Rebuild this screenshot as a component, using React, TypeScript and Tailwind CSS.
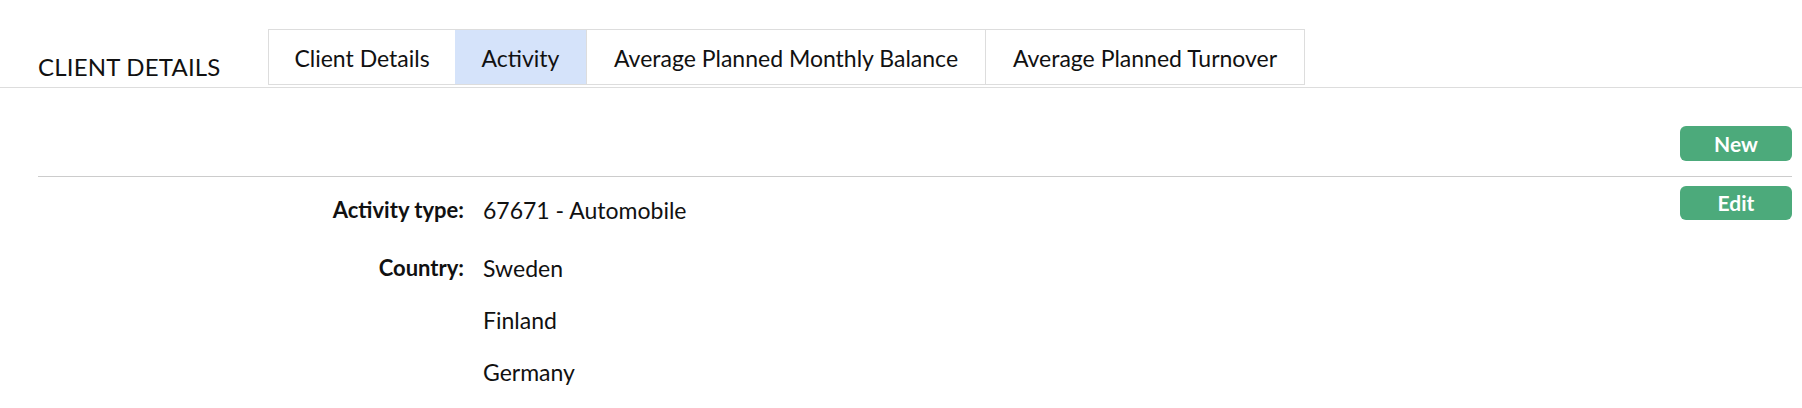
import React from "react";

type Row = {
  label: string;
  values: string[];
};

const tabs = [
  { name: "Client Details", width: "w-[186px]", active: false, divider: false },
  { name: "Activity", width: "w-[131px]", active: true, divider: false },
  { name: "Average Planned Monthly Balance", width: "w-[399px]", active: false, divider: true },
  { name: "Average Planned Turnover", width: "w-[319px]", active: false, divider: true },
];

const rows: Row[] = [
  { label: "Activity type:", values: ["67671 - Automobile"] },
  { label: "Country:", values: ["Sweden", "Finland", "Germany"] },
];

const App = () => {
  return (
    <div className="min-h-screen bg-white font-['Lato',sans-serif] text-[#111111]">
      {/* Encabezado con pestañas */}
      <div className="flex h-[88px] border-b border-[#dddddd] pl-[38px]">
        <h1 className="mt-[52px] w-[230px] text-[24px] font-normal leading-[30px] tracking-[0.2px]">
          CLIENT DETAILS
        </h1>
        <div className="mt-[29px] flex h-[56px] border border-[#dddddd]">
          {tabs.map((tab) => (
            <div
              key={tab.name}
              className={[
                "flex items-center justify-center pt-[2px] text-[23px] leading-[27px]",
                tab.width,
                tab.active ? "bg-[#d5e3fa]" : "bg-white",
                tab.divider ? "border-l border-[#dddddd]" : "",
              ].join(" ")}
            >
              {tab.name}
            </div>
          ))}
        </div>
      </div>

      <div className="pl-[38px] pr-[10px]">
        {/* Barra de acciones */}
        <div className="flex justify-end border-b border-[#cccccc] pt-[38px] pb-[15px]">
          <button className="h-[35px] w-[112px] rounded-[6px] bg-[#4caa7b] text-[21px] font-bold text-white">
            New
          </button>
        </div>

        <div className="flex items-start">
          <div className="grid flex-1 grid-cols-[426px_1fr] gap-x-[19px] pt-[7px] text-[23px]">
            {rows.map((row, i) => (
              <React.Fragment key={row.label}>
                <div
                  className={
                    "text-right text-[22px] font-bold leading-[52px]" +
                    (i === 0 ? " mb-[6px]" : "")
                  }
                >
                  {row.label}
                </div>
                <div className={i === 0 ? "mb-[6px]" : ""}>
                  {row.values.map((v) => (
                    <div key={v} className="leading-[52px]">
                      {v}
                    </div>
                  ))}
                </div>
              </React.Fragment>
            ))}
          </div>
          <button className="mt-[9px] h-[34px] w-[112px] rounded-[6px] bg-[#4caa7b] text-[21px] font-bold text-white">
            Edit
          </button>
        </div>
      </div>
    </div>
  );
};

export default App;
